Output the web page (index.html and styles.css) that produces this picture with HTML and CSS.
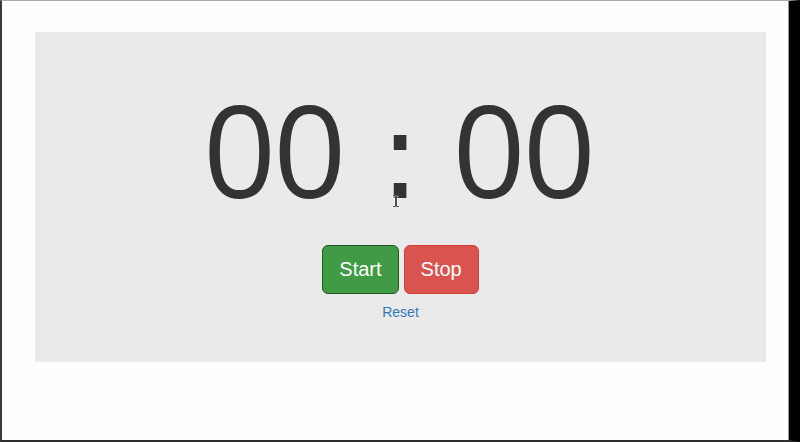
FILE: index.html
```html
<!DOCTYPE html>
<html>
<head>
<meta charset="utf-8">
<link rel="stylesheet" href="styles.css">
</head>
<body>
<div class="frame">
  <div class="page">
    <div class="jumbotron">
      <div class="timer"><span class="digits">00</span><span class="colon">:</span><span class="digits">00</span></div>
      <div class="controls">
        <button class="btn btn-success">Start</button>
        <button class="btn btn-danger">Stop</button>
      </div>
      <a class="reset" href="#">Reset</a>
    </div>
  </div>
</div>
<svg class="cursor" width="8" height="12" viewBox="0 0 8 12">
  <path d="M1 0.5h2.5v11H1M7 0.5H4.5v11H7" fill="none" stroke="#fff" stroke-width="1.6"/>
  <path d="M1 0.5h2.5v11H1M7 0.5H4.5v11H7" fill="none" stroke="#222" stroke-width="0.8"/>
</svg>
</body>
</html>
```
FILE: styles.css
```css
html, body {
  margin: 0;
  padding: 0;
  background: #000;
}
.frame {
  width: 800px;
  height: 442px;
  box-sizing: border-box;
  border-left: 2px solid #3a3a3a;
  border-top: 1px solid #ababab;
  border-bottom: 2px solid #2e2e2e;
  border-right: 11px solid #000;
  background: #fff;
}
.page {
  height: 100%;
  box-sizing: border-box;
  border-right: 1px solid #9a9a9a;
  padding: 31px 22px 0 33px;
  background: #fefefe;
}
.jumbotron {
  height: 330px;
  background: #eaeaea;
  display: flex;
  flex-direction: column;
  align-items: center;
  font-family: "Liberation Sans", Arial, sans-serif;
}
.timer {
  display: flex;
  align-items: baseline;
  color: #333;
  margin-top: 53px;
  margin-left: -5px;
}
.digits {
  font-family: "Open Sans", sans-serif;
  font-size: 128px;
  line-height: 1;
  letter-spacing: -3px;
}
.colon {
  font-family: "DejaVu Sans", sans-serif;
  font-size: 122px;
  line-height: 1;
  margin: 0 32px 0 36px;
}
.controls {
  margin-top: 28px;
  display: flex;
  gap: 5px;
}
.btn {
  font-family: "Liberation Sans", Arial, sans-serif;
  font-size: 20px;
  line-height: 1.3333;
  padding: 10px 16px;
  border-radius: 6px;
  color: #fff;
  border: 1px solid transparent;
  margin: 0;
}
.btn-success {
  background: #3f9c45;
  border-color: #255625;
}
.btn-danger {
  background: #d9534f;
  border-color: #d43f3a;
}
.reset {
  margin-top: 8px;
  font-size: 14px;
  line-height: 20px;
  color: #337ab7;
  text-decoration: none;
}
.cursor {
  position: absolute;
  left: 392px;
  top: 195px;
}
```
